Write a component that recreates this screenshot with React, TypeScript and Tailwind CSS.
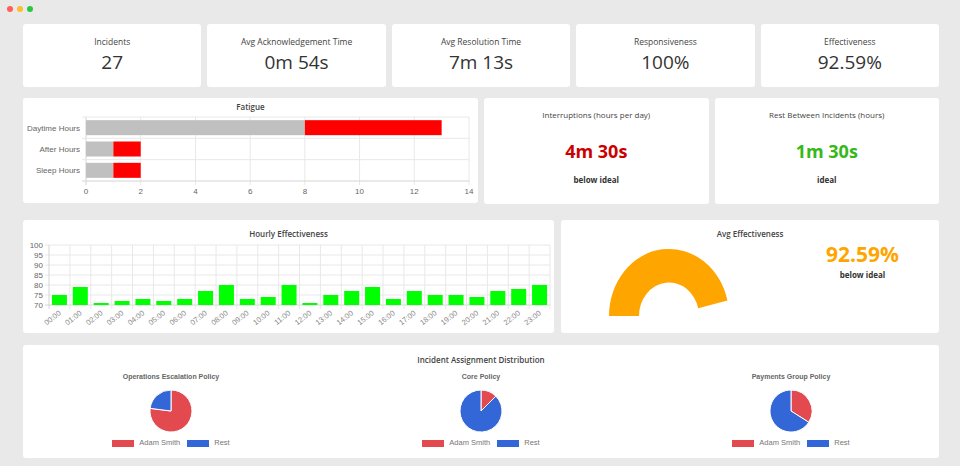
import React from "react";

const stats = [
  { label: "Incidents", value: "27" },
  { label: "Avg Acknowledgement Time", value: "0m 54s" },
  { label: "Avg Resolution Time", value: "7m 13s" },
  { label: "Responsiveness", value: "100%" },
  { label: "Effectiveness", value: "92.59%" },
];

const hourly = [75, 79, 71, 72, 73, 72, 73, 77, 80, 73, 74, 80, 71, 75, 77, 79, 73, 77, 75, 75, 74, 77, 78, 80];

const pies = [
  { title: "Operations Escalation Policy", share: 0.77 },
  { title: "Core Policy", share: 0.125 },
  { title: "Payments Group Policy", share: 0.34 },
];

function StatCard({ label, value }: { label: string; value: string }) {
  return (
    <div className="h-[63px] bg-white rounded-[3px] flex flex-col items-center pt-[13px]">
      <div className="text-[8.5px] leading-[10px] text-[#444]">{label}</div>
      <div className="mt-[4px] text-[19px] leading-[22px] text-[#333]">{value}</div>
    </div>
  );
}

function FatigueChart() {
  const L = 63;
  const R = 446;
  const T = 5;
  const B = 69;
  const ux = (R - L) / 14;
  const rowH = (B - T) / 3;
  const rows = [
    { label: "Daytime Hours", gray: 8, red: 5 },
    { label: "After Hours", gray: 1, red: 1 },
    { label: "Sleep Hours", gray: 1, red: 1 },
  ];
  return (
    <svg width="455" height="88" className="font-['Liberation_Sans',sans-serif]">
      {[0, 1, 2, 3, 4, 5, 6, 7].map((i) => (
        <line key={i} x1={L + i * 2 * ux} x2={L + i * 2 * ux} y1={T} y2={B + 4} stroke={i === 0 ? "#d4d4d4" : "#e8e8e8"} strokeWidth="1" />
      ))}
      {[0, 1, 2, 3].map((k) => (
        <line key={k} x1={L - 4} x2={R} y1={T + k * rowH} y2={T + k * rowH} stroke={k === 3 ? "#d4d4d4" : "#e8e8e8"} strokeWidth="1" />
      ))}
      {rows.map((r, i) => {
        const cy = T + rowH * i + rowH / 2;
        return (
          <g key={r.label}>
            <rect x={L} y={cy - 7.5} width={r.gray * ux} height="15" fill="#c0c0c0" />
            <rect x={L + r.gray * ux} y={cy - 7.5} width={r.red * ux} height="15" fill="#ff0000" />
            <text x="57" y={cy + 3} textAnchor="end" fontSize="8" fill="#666">
              {r.label}
            </text>
          </g>
        );
      })}
      {[0, 2, 4, 6, 8, 10, 12, 14].map((t) => (
        <text key={t} x={L + t * ux} y="82" textAnchor="middle" fontSize="8" fill="#666">
          {t}
        </text>
      ))}
    </svg>
  );
}

function HourlyChart() {
  const L = 26;
  const R = 527;
  const T = 6;
  const B = 66;
  const cw = (R - L) / 24;
  const py = (v: number) => B - (v - 70) * 2;
  return (
    <svg width="531" height="94" className="font-['Liberation_Sans',sans-serif]">
      {[70, 75, 80, 85, 90, 95, 100].map((v) => (
        <g key={v}>
          <line x1={L - 4} x2={R} y1={py(v)} y2={py(v)} stroke={v === 70 ? "#d4d4d4" : "#e8e8e8"} />
          <text x="20" y={py(v) + 3} textAnchor="end" fontSize="8" fill="#666">
            {v}
          </text>
        </g>
      ))}
      {Array.from({ length: 25 }).map((_, i) => (
        <line key={i} x1={L + i * cw} x2={L + i * cw} y1={T} y2={B + 4} stroke={i === 0 ? "#d4d4d4" : "#e8e8e8"} />
      ))}
      {hourly.map((v, i) => {
        const cx = L + i * cw + cw / 2;
        const label = String(i).padStart(2, "0") + ":00";
        return (
          <g key={i}>
            <rect x={cx - 7.5} y={py(v)} width="15" height={B - py(v)} fill="#00ff00" />
            <text x={cx + 2} y={B + 9} textAnchor="end" fontSize="7.5" fill="#888" transform={`rotate(-38 ${cx + 2} ${B + 9})`}>
              {label}
            </text>
          </g>
        );
      })}
    </svg>
  );
}

function Gauge() {
  return (
    <svg width="216" height="80">
      <path d="M 48 77 A 60 67 0 0 1 166.4 61.55 L 137.2 69.3 A 30 33.5 0 0 0 78 77 Z" fill="#ffa500" />
    </svg>
  );
}

function Pie({ share }: { share: number }) {
  const c = 22;
  const r = 21;
  const a = share * 2 * Math.PI;
  const x = c + r * Math.sin(a);
  const y = c - r * Math.cos(a);
  const redLarge = share > 0.5 ? 1 : 0;
  const blueLarge = share < 0.5 ? 1 : 0;
  return (
    <svg width="44" height="44">
      <path d={`M ${c} ${c} L ${c} ${c - r} A ${r} ${r} 0 ${redLarge} 1 ${x} ${y} Z`} fill="#e34a50" stroke="#fff" strokeWidth="1" />
      <path d={`M ${c} ${c} L ${x} ${y} A ${r} ${r} 0 ${blueLarge} 1 ${c} ${c - r} Z`} fill="#3366d6" stroke="#fff" strokeWidth="1" />
    </svg>
  );
}

function PieBlock({ title, share }: { title: string; share: number }) {
  return (
    <div className="w-[180px] flex flex-col items-center font-['Liberation_Sans',sans-serif]">
      <div className="mt-[7px] text-[7px] leading-[9px] font-bold text-[#666]">{title}</div>
      <div className="mt-[8px] h-[44px]">
        <Pie share={share} />
      </div>
      <div className="mt-[6px] flex items-center h-[8px] text-[7.5px] leading-[8px] text-[#777]">
        <span className="w-[22px] h-[7px] bg-[#e34a50]" />
        <span className="ml-[5px]">Adam Smith</span>
        <span className="ml-[7px] w-[22px] h-[7px] bg-[#3366d6]" />
        <span className="ml-[5px]">Rest</span>
      </div>
    </div>
  );
}

export default function App() {
  return (
    <div className="w-[960px] h-[466px] overflow-hidden bg-[#e9e9e9] font-['Open_Sans',sans-serif]">
      <div className="h-[24px] flex gap-[4px] pl-[7px] pt-[6px]">
        <span className="w-[6px] h-[6px] rounded-full bg-[#ff5f57]" />
        <span className="w-[6px] h-[6px] rounded-full bg-[#febc2e]" />
        <span className="w-[6px] h-[6px] rounded-full bg-[#28c840]" />
      </div>

      <div className="pl-[23px] pr-[21px]">
        <div className="grid grid-cols-5 gap-[6px]">
          {stats.map((s) => (
            <StatCard key={s.label} label={s.label} value={s.value} />
          ))}
        </div>

        <div className="mt-[11px] grid grid-cols-4 gap-[6px]">
          <div className="col-span-2 h-[105px] bg-white rounded-[3px] flex flex-col">
            <div className="pt-[4px] text-center text-[8px] leading-[10px] font-semibold text-[#444]">Fatigue</div>
            <FatigueChart />
          </div>
          <div className="h-[106px] bg-white rounded-[3px] flex flex-col items-center pt-[12px]">
            <div className="text-[8px] leading-[10px] text-[#444]">Interruptions (hours per day)</div>
            <div className="mt-[20px] text-[18px] leading-[22px] font-bold text-[#cc0000]">4m 30s</div>
            <div className="mt-[13px] text-[8px] leading-[10px] font-bold text-[#333]">below ideal</div>
          </div>
          <div className="h-[106px] bg-white rounded-[3px] flex flex-col items-center pt-[12px]">
            <div className="text-[8px] leading-[10px] text-[#444]">Rest Between Incidents (hours)</div>
            <div className="mt-[20px] text-[18px] leading-[22px] font-bold text-[#36b819]">1m 30s</div>
            <div className="mt-[13px] text-[8px] leading-[10px] font-bold text-[#333]">ideal</div>
          </div>
        </div>

        <div className="mt-[16px] flex gap-[7px]">
          <div className="w-[531px] h-[113px] bg-white rounded-[3px] flex flex-col">
            <div className="pt-[9px] text-center text-[8px] leading-[10px] font-semibold text-[#444]">Hourly Effectiveness</div>
            <HourlyChart />
          </div>
          <div className="flex-1 h-[113px] bg-white rounded-[3px] flex flex-col">
            <div className="pt-[9px] text-center text-[8px] leading-[10px] font-semibold text-[#444]">Avg Effectiveness</div>
            <div className="flex">
              <Gauge />
              <div className="flex-1 pl-[9px] flex flex-col items-center pt-[3px]">
                <div className="text-[21px] leading-[24px] font-bold text-[#ffa500]">92.59%</div>
                <div className="mt-[4px] text-[8px] leading-[10px] font-bold text-[#333]">below ideal</div>
              </div>
            </div>
          </div>
        </div>

        <div className="mt-[12px] h-[113px] bg-white rounded-[3px] flex flex-col">
          <div className="pt-[10px] text-center text-[8px] leading-[10px] font-semibold text-[#444]">Incident Assignment Distribution</div>
          <div className="flex justify-center gap-[130px]">
            {pies.map((p) => (
              <PieBlock key={p.title} title={p.title} share={p.share} />
            ))}
          </div>
        </div>
      </div>
    </div>
  );
}
